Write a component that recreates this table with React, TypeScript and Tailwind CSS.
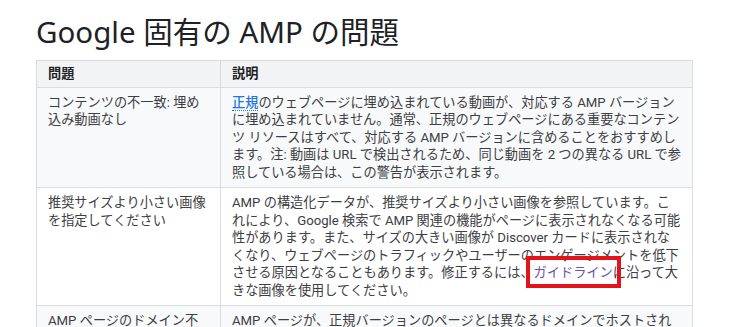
const rows = [
  {
    issue: ["コンテンツの不一致: 埋め", "込み動画なし"],
    bg: "bg-[#f8f9fa]",
    desc: [
      <>
        <a className="font-medium text-[#1a73e8] border-b border-dotted border-[#1a73e8]">正規</a>
        のウェブページに埋め込まれている動画が、対応する AMP バージョン
      </>,
      "に埋め込まれていません。通常、正規のウェブページにある重要なコンテン",
      "ツ リソースはすべて、対応する AMP バージョンに含めることをおすすめし",
      "ます。注: 動画は URL で検出されるため、同じ動画を 2 つの異なる URL で参",
      "照している場合は、この警告が表示されます。",
    ],
  },
  {
    issue: ["推奨サイズより小さい画像", "を指定してください"],
    bg: "bg-white",
    desc: [
      "AMP の構造化データが、推奨サイズより小さい画像を参照しています。こ",
      "れにより、Google 検索で AMP 関連の機能がページに表示されなくなる可能",
      "性があります。また、サイズの大きい画像が Discover カードに表示されな",
      "くなり、ウェブページのトラフィックやユーザーのエンゲージメントを低下",
      <>
        させる原因となることもあります。修正するには、
        <span className="relative text-[#6b4fb0]">
          ガイドライン
          <span className="absolute -left-[8px] -right-[8px] -top-[9px] -bottom-[8px] border-4 border-[#e3121b]" />
        </span>
        に沿って大
      </>,
      "きな画像を使用してください。",
    ],
  },
  {
    issue: ["AMP ページのドメイン不", "一致"],
    bg: "bg-[#f8f9fa]",
    desc: [
      "AMP ページが、正規バージョンのページとは異なるドメインでホストされ",
      "ています。AMP ページと正規ページは同じドメインでホストしてください。",
    ],
  },
];

export default function App() {
  return (
    <div
      className="w-[742px] h-[327px] overflow-hidden bg-white pl-[36px]"
      style={{ fontFamily: 'Roboto, "Noto Sans CJK JP", sans-serif' }}
    >
      <h1
        className="mt-[14px] mb-[10px] text-[29.5px] leading-[36px] text-[#202124]"
        style={{ fontFamily: '"Noto Sans", "Noto Sans CJK JP", sans-serif' }}
      >
        Google 固有の AMP の問題
      </h1>
      <table className="table-fixed w-[657px] border-collapse text-[13.2px] leading-[17.5px] text-[#3c4043]">
        <colgroup>
          <col className="w-[184px]" />
          <col />
        </colgroup>
        <thead>
          <tr className="bg-[#f1f3f4]">
            <th className="border border-[#dadce0] px-[11px] py-[4px] text-left font-bold text-[#202124]">
              問題
            </th>
            <th className="border border-[#dadce0] px-[11px] py-[4px] text-left font-bold text-[#202124]">
              説明
            </th>
          </tr>
        </thead>
        <tbody>
          {rows.map((row, i) => (
            <tr key={i} className={row.bg}>
              <td className="border border-[#dadce0] px-[11px] py-[6px] align-top">
                {row.issue.map((l, j) => (
                  <span key={j} className="block whitespace-nowrap">
                    {l}
                  </span>
                ))}
              </td>
              <td className="border border-[#dadce0] px-[11px] py-[6px] align-top">
                {row.desc.map((l, j) => (
                  <span key={j} className="block whitespace-nowrap">
                    {l}
                  </span>
                ))}
              </td>
            </tr>
          ))}
        </tbody>
      </table>
    </div>
  );
}
